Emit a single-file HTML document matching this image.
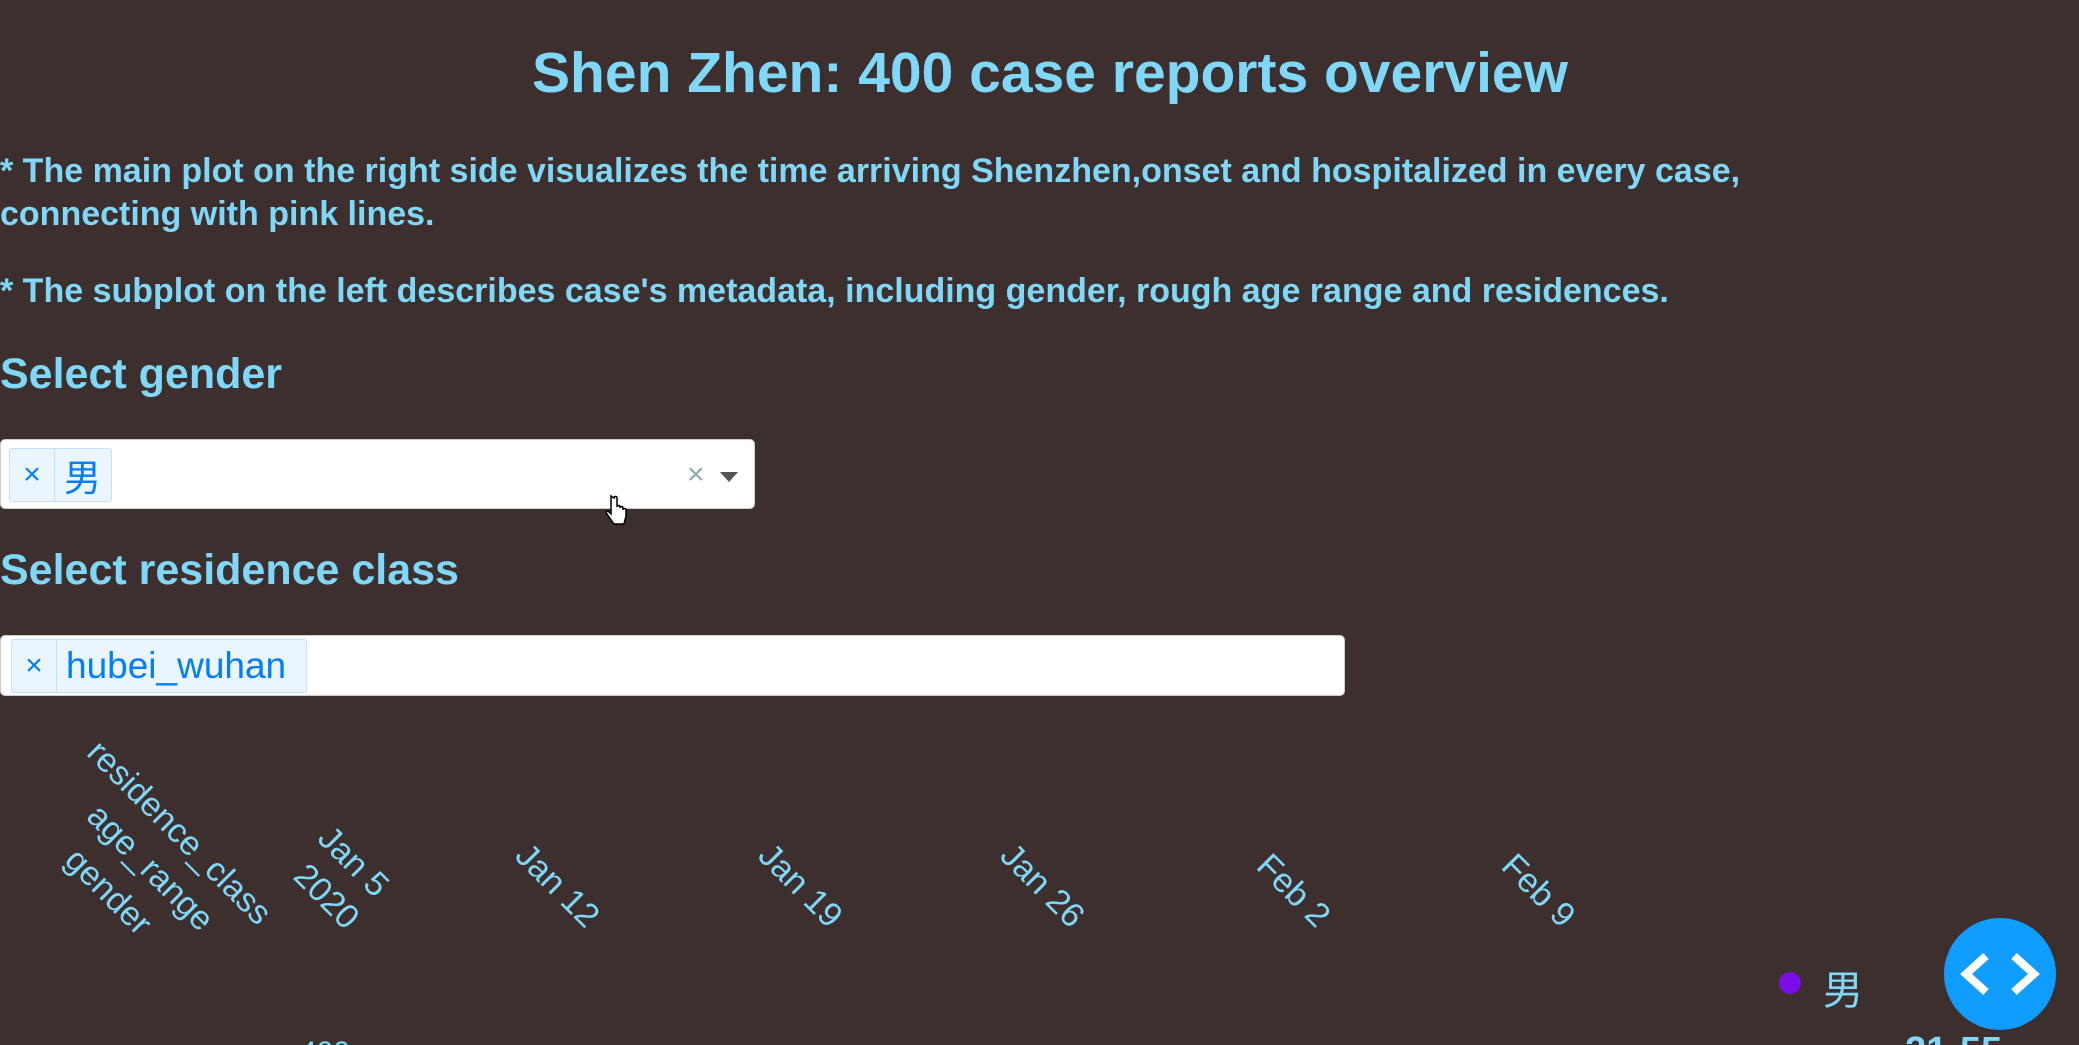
<!DOCTYPE html>
<html><head><meta charset="utf-8"><style>
html,body{margin:0;padding:0;height:1045px;overflow:hidden}
body{width:2079px;background:#3e2f2f;position:relative;font-family:"Liberation Sans","Noto Sans CJK SC",sans-serif;color:#7fd8f8}
.t{position:absolute;white-space:nowrap}
h1{position:absolute;left:0;width:2100px;top:40px;margin:0;text-align:center;font-size:57px;font-weight:bold;color:#7fd8f8}
.p{position:absolute;left:0;font-weight:bold;font-size:34px;line-height:43px;width:1850px}
.h{position:absolute;left:0;font-weight:bold;font-size:43px}
.box{position:absolute;left:0;background:#fff;border:1px solid #ccc;border-radius:5px;box-sizing:border-box}
.tag{position:absolute;background:#ebf5ff;border:1px solid #c2e0ff;border-radius:3px;color:#007eff;font-size:37px;box-sizing:border-box;display:flex;align-items:center}
.tag .x{width:44px;text-align:center;border-right:1px solid #c2e0ff;height:100%;display:flex;align-items:center;justify-content:center;font-size:30px}
.tag .v{padding:0 9px}
.r{position:absolute;font-size:34px;white-space:nowrap;transform:translate(-50%,-50%) rotate(45deg)}
.clip{position:absolute;left:0;top:0;width:2079px;height:1045px;overflow:hidden}
</style></head><body><div class="clip">
<h1>Shen Zhen: 400 case reports overview</h1>
<div class="p" style="top:150px">* The main plot on the right side visualizes the time arriving Shenzhen,onset and hospitalized in every case, connecting with pink lines.</div>
<div class="p" style="top:270px">* The subplot on the left describes case's metadata, including gender, rough age range and residences.</div>
<div class="h" style="top:350px">Select gender</div>
<div class="box" style="top:439px;width:755px;height:70px">
  <div class="tag" style="left:8px;top:8px;width:103px;height:54px"><span class="x">×</span><span class="v">男</span></div>
  <span class="t" style="left:686px;top:18px;font-size:30px;color:#8aa">×</span>
  <span class="t" style="left:719px;top:32px;width:0;height:0;border-left:9px solid transparent;border-right:9px solid transparent;border-top:10px solid #555"></span>
</div>
<svg style="position:absolute;left:605px;top:494px" width="24" height="36" viewBox="0 0 24 36"><path d="M6 2 v18 l-3-3 c-2 0-2 2-1 3 l7 10 h10 l2-8 v-6 c0-2-3-2-3 0 v-2 c0-2-3-2-3 0 v-1 c0-2-3-2-3 0 v-9 c0-2-3-2-3 0z" fill="#fff" stroke="#000" stroke-width="1.5"/></svg>
<div class="h" style="top:546px">Select residence class</div>
<div class="box" style="top:635px;width:1345px;height:61px">
  <div class="tag" style="left:10px;top:3px;width:296px;height:54px"><span class="x">×</span><span class="v">hubei_wuhan</span></div>
</div>
<div class="r" style="left:179px;top:833px">residence_class</div>
<div class="r" style="left:150px;top:868px">age_range</div>
<div class="r" style="left:108px;top:892px">gender</div>
<div class="r" style="left:353px;top:862px">Jan 5</div>
<div class="r" style="left:326px;top:897px">2020</div>
<div class="r" style="left:557px;top:886px">Jan 12</div>
<div class="r" style="left:800px;top:886px">Jan 19</div>
<div class="r" style="left:1042px;top:886px">Jan 26</div>
<div class="r" style="left:1293px;top:891px">Feb 2</div>
<div class="r" style="left:1538px;top:891px">Feb 9</div>
<div style="position:absolute;left:1779px;top:972px;width:22px;height:22px;border-radius:50%;background:#7a0ee8"></div>
<div class="t" style="left:1823px;top:958px;font-size:40px">男</div>
<div class="t" style="left:300px;top:1036px;font-size:30px">400</div>
<div class="t" style="left:1905px;top:1030px;font-size:38px;font-weight:bold">21-55</div>
<div style="position:absolute;left:1944px;top:918px;width:112px;height:112px;border-radius:50%;background:#119dff"></div>
<svg style="position:absolute;left:1944px;top:918px" width="112" height="112" viewBox="0 0 112 112"><path d="M42 38 L22 56 L42 74 M70 38 L90 56 L70 74" stroke="#fff" stroke-width="8" fill="none"/></svg>
</div></body></html>
